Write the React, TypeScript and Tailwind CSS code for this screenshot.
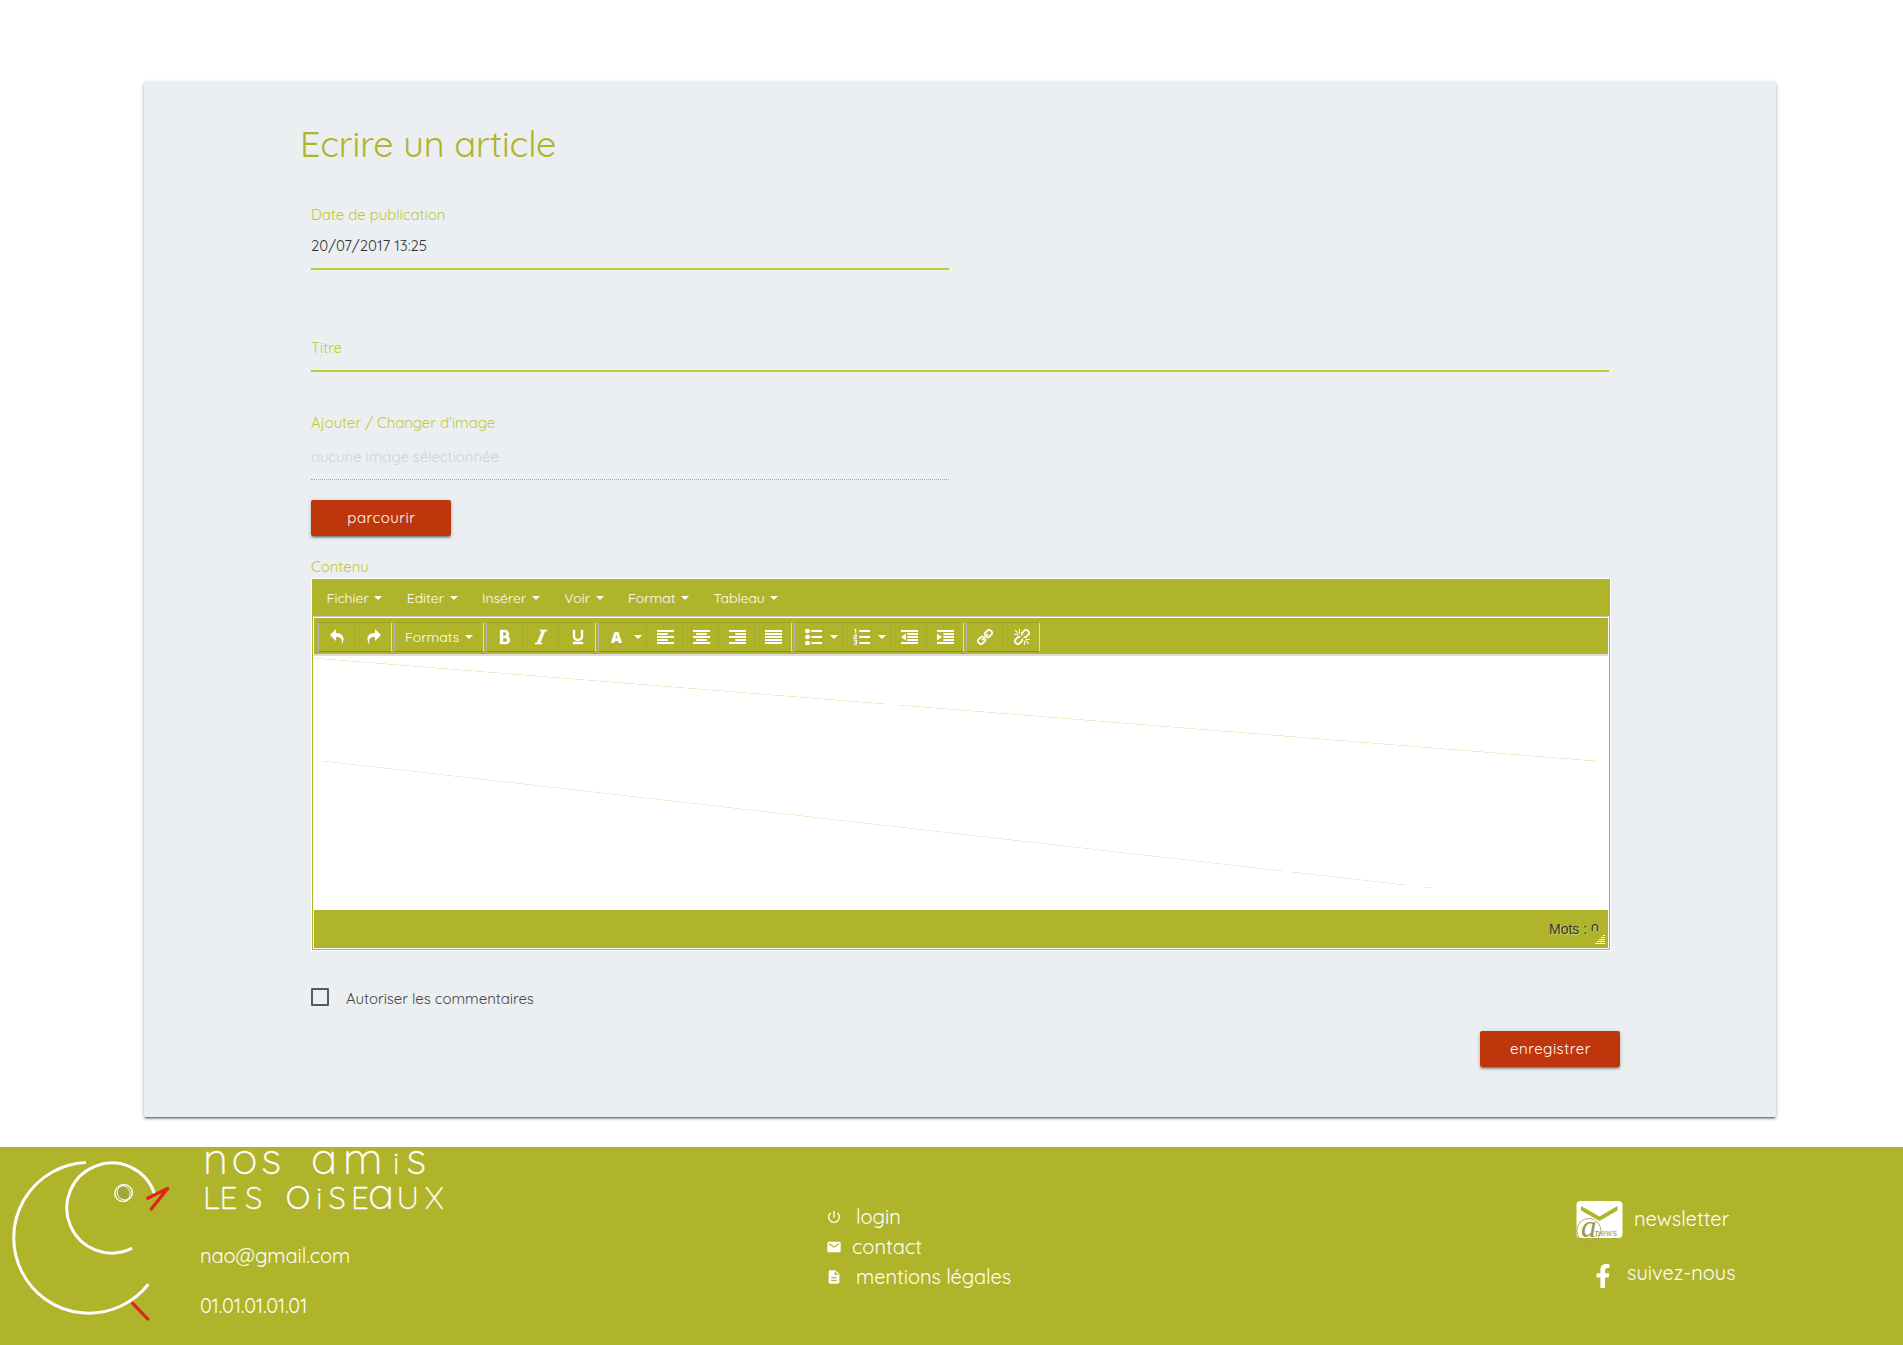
import type { ReactNode } from "react";
import { FaFacebookF } from "react-icons/fa";
import { MdDescription, MdEmail, MdPowerSettingsNew } from "react-icons/md";

const Caret = () => (
  <span className="h-0 w-0 shrink-0 border-x-4 border-t-4 border-x-transparent border-t-white" />
);

/* Toolbar glyph drawn on a 1024 unit grid */
const Glyph = ({ children, wide }: { children: ReactNode; wide?: boolean }) => (
  <svg
    viewBox="0 0 1024 1024"
    preserveAspectRatio="none"
    fill="currentColor"
    className={wide ? "ml-px h-4 w-[17px] shrink-0" : "ml-px h-4 w-4 shrink-0"}
  >
    {children}
  </svg>
);

const Bars = ({ rows }: { rows: [number, number][] }) => (
  <>
    {rows.map(([x, w], i) => (
      <rect key={i} x={x} y={64 + i * 192} width={w} height={128} />
    ))}
  </>
);

const CHAIN =
  "M476.9 675.1c4.6 9 7 19.2 7 29.7 0 17.6-6.7 34.1-19 46.3l-163.4 163.4c-12.2 12.2-28.7 19-46.3 19s-34.1-6.7-46.3-19l-99.4-99.4c-12.2-12.2-19-28.7-19-46.3s6.7-34.1 19-46.3l163.4-163.4c12.2-12.2 28.7-19 46.3-19 10.5 0 20.6 2.4 29.7 7l65.3-65.3c-27.9-21.4-61.4-32.2-95-32.2-40 0-79.9 15.2-110.3 45.6l-163.4 163.4c-60.7 60.7-60.7 160 0 220.6l99.4 99.4c30.4 30.4 70.3 45.6 110.3 45.6s79.9-15.2 110.3-45.6l163.4-163.4c55.8-55.8 60.2-144.3 13.3-205.3z";

const Chain = () => (
  <g stroke="currentColor" strokeWidth="36">
    <path d={CHAIN} />
    <path d={CHAIN} transform="rotate(180 512 512)" />
  </g>
);

const Tool = ({ children, last }: { children: ReactNode; last?: boolean }) => (
  <div
    className={
      last
        ? "flex h-[28px] w-9 items-center justify-center"
        : "flex h-[28px] w-9 items-center justify-center border-r border-[#a6ab29]"
    }
  >
    {children}
  </div>
);

const MenuTool = ({ children }: { children: ReactNode }) => (
  <div className="flex h-[28px] w-12 items-center justify-between border-r border-[#a6ab29] pr-[4px] pl-[9px]">
    {children}
    <Caret />
  </div>
);

const Group = ({ children }: { children: ReactNode }) => (
  <div className="flex h-[30px] border border-t-[#9da126] border-r-[#dcdcdc] border-b-[#8a8e22] border-l-[#b4b4b4]">
    {children}
  </div>
);

type Span = [number, number];

/* Stepped hairline: one short dash per pixel row, with interruptions */
const Stair = ({ x, y, rows, pitch, dash, gaps }: { x: number; y: number; rows: number; pitch: number; dash: number; gaps: Span[] }) => (
  <>
    {Array.from({ length: rows }, (_, i) => x + i * pitch).map((sx, i) =>
      gaps.some(([a, b]) => sx + dash / 2 > a && sx + dash / 2 < b) ? null : (
        <rect key={i} x={sx} y={y + i} width={dash} height={1} />
      ),
    )}
  </>
);

const menus = ["Fichier", "Editer", "Insérer", "Voir", "Format", "Tableau"];

const Editor = () => (
  <div className="flex h-[373px] w-[1300px] flex-col border border-white bg-[#afb42b] text-sm text-white">
    <div className="flex h-[37px] items-center pl-[14px]">
      {menus.map((m) => (
        <div key={m} className="mr-6 flex items-center gap-[6px]">
          <span className="relative left-[0.5px] tracking-[-0.02px]">{m}</span>
          <Caret />
        </div>
      ))}
    </div>
    <div className="mx-px mb-px flex h-[333px] flex-col border border-white border-t-[#c4c4c4]">
      <div className="flex h-[37px] gap-[2px] border-t border-white pt-[4px] pl-[4px]">
        <Group>
          <Tool>
            <Glyph>
              <path d="M761.862 1024c113.726-206.032 132.888-520.306-313.862-509.824v253.824l-384-384 384-384v248.372c534.962-13.942 594.57 472.214 313.862 775.628z" />
            </Glyph>
          </Tool>
          <Tool last>
            <Glyph>
              <path d="M576 248.372v-248.372l384 384-384 384v-253.824c-446.75-10.482-427.588 303.792-313.86 509.824-280.712-303.414-221.1-789.57 313.86-775.628z" />
            </Glyph>
          </Tool>
        </Group>
        <Group>
          <div className="flex h-[28px] w-[88px] items-center gap-[6px] pl-[10px]">
            <span>Formats</span>
            <Caret />
          </div>
        </Group>
        <Group>
          <Tool>
            <Glyph>
              <path
                fillRule="evenodd"
                stroke="currentColor"
                strokeWidth="24"
                d="M707.88 484.652c37.498-44.542 60.12-102.008 60.12-164.652 0-141.16-114.842-256-256-256h-320v896h384c141.158 0 256-114.842 256-256 0-92.956-49.798-174.496-124.12-219.348zM384 192h101.5c55.968 0 101.5 57.42 101.5 128s-45.532 128-101.5 128h-101.5v-256zM543 832h-159v-256h159c58.45 0 106 57.42 106 128s-47.55 128-106 128z"
              />
            </Glyph>
          </Tool>
          <Tool>
            <Glyph>
              <path d="M896 64v64h-128l-320 768h128v64h-448v-64h128l320-768h-128v-64h448z" stroke="currentColor" strokeWidth="36" />
            </Glyph>
          </Tool>
          <Tool last>
            <Glyph>
              <path d="M704 64h128v416c0 159.058-143.268 288-320 288-176.73 0-320-128.942-320-288v-416h128v416c0 40.166 18.238 78.704 51.354 108.506 36.896 33.204 86.846 51.494 140.646 51.494s103.75-18.29 140.646-51.494c33.116-29.802 51.354-68.34 51.354-108.506v-416zM192 832h640v128h-640v-128z" stroke="currentColor" strokeWidth="24" />
            </Glyph>
          </Tool>
        </Group>
        <Group>
          <div className="flex h-[28px] w-12 items-center justify-between border-r border-[#a6ab29] pr-[4px] pl-[12px]">
            <span className="font-['Open_Sans'] text-[15px] leading-4 font-extrabold">A</span>
            <Caret />
          </div>
          <Tool>
            <Glyph wide>
              <Bars rows={[[0, 1024], [0, 640], [0, 1024], [0, 640], [0, 1024]]} />
            </Glyph>
          </Tool>
          <Tool>
            <Glyph wide>
              <Bars rows={[[0, 1024], [192, 640], [0, 1024], [192, 640], [0, 1024]]} />
            </Glyph>
          </Tool>
          <Tool>
            <Glyph wide>
              <Bars rows={[[0, 1024], [384, 640], [0, 1024], [384, 640], [0, 1024]]} />
            </Glyph>
          </Tool>
          <Tool last>
            <Glyph wide>
              <Bars rows={[[0, 1024], [0, 1024], [0, 1024], [0, 1024], [0, 1024]]} />
            </Glyph>
          </Tool>
        </Group>
        <Group>
          <MenuTool>
            <Glyph wide>
              {[128, 512, 896].map((y) => (
                <g key={y}>
                  <circle cx="150" cy={y} r="150" />
                  <rect x="384" y={y - 64} width="640" height="128" />
                </g>
              ))}
            </Glyph>
          </MenuTool>
          <MenuTool>
            <Glyph wide>
              <path d="M384 64h640v128H384zM384 448h640v128H384zM384 832h640v128H384z" />
              <path
                d="M80 32h80v240M40 384h160v110H70v110h160M40 716h170v256H40M80 844h130"
                fill="none"
                stroke="currentColor"
                strokeWidth="64"
              />
            </Glyph>
          </MenuTool>
          <Tool>
            <Glyph wide>
              <Bars rows={[[0, 1024], [384, 640], [384, 640], [384, 640], [0, 1024]]} />
              <path d="M300 290v444L0 512z" />
            </Glyph>
          </Tool>
          <Tool last>
            <Glyph wide>
              <Bars rows={[[0, 1024], [384, 640], [384, 640], [384, 640], [0, 1024]]} />
              <path d="M0 290v444l300-222z" />
            </Glyph>
          </Tool>
        </Group>
        <Group>
          <Tool>
            <Glyph>
              <Chain />
              <path d="M350 674L674 350" stroke="currentColor" strokeWidth="110" strokeLinecap="round" />
            </Glyph>
          </Tool>
          <Tool last>
            <Glyph>
              <Chain />
              <path
                d="M352 30v210M30 352h210M90 90l170 170M672 994V784M994 672H784M934 934L764 764"
                stroke="currentColor"
                strokeWidth="70"
                strokeLinecap="round"
              />
            </Glyph>
          </Tool>
        </Group>
      </div>
      <div className="h-[256px] border-t-2 border-[#dddddd] bg-white">
        <svg viewBox="314 656 1294 254" className="block h-[254px] w-[1294px] text-[#ebedcb]" fill="currentColor">
          <Stair x={313} y={658} rows={103} pitch={12.46} dash={10.6} gaps={[[882, 896]]} />
          <Stair x={323.5} y={761} rows={127} pitch={8.73} dash={7.2} gaps={[[1280, 1293], [1407, 1424]]} />
        </svg>
      </div>
      <div className="relative h-[38px]">
        <div className="pt-[9px] pl-[1235px] font-['Liberation_Sans'] text-sm leading-5 whitespace-nowrap text-[#333333] [text-shadow:1px_1px_0_rgba(255,255,255,0.4)]">
          Mots : 0
        </div>
        <div className="absolute right-0 bottom-0 flex h-[17px] w-[17px] flex-col items-end gap-px bg-[#afb42b] pt-[4px] pr-[3px]">
          <i className="h-px w-[2px] bg-white" />
          <i className="h-px w-[4px] bg-white" />
          <i className="h-px w-[6px] bg-white" />
          <i className="h-px w-[8px] bg-white" />
          <i className="h-px w-[10px] bg-white" />
        </div>
      </div>
    </div>
  </div>
);

const Label = ({ children }: { children: ReactNode }) => (
  <div className="h-5 text-[15px] leading-5 tracking-[-0.06px] text-[#c0ca33]">{children}</div>
);

const Button = ({ children }: { children: ReactNode }) => (
  <button className="block h-9 w-[140px] rounded-[2px] bg-[#bf360c] pl-px text-[15px] leading-9 tracking-[0.5px] text-white shadow-[0_2px_2px_0_rgba(0,0,0,0.24),0_1px_5px_0_rgba(0,0,0,0.16),0_3px_1px_-2px_rgba(0,0,0,0.2)]">
    {children}
  </button>
);

const BirdLogo = () => (
  <svg viewBox="0 0 460 198" width="460" height="198" fill="none" className="block">
    <path d="M86 15.6A75.3 75.3 0 1 0 148.3 137.3" stroke="#fff" strokeWidth="3" />
    <path d="M154.3 46.3A45 45 0 1 0 131 101.7" stroke="#fff" strokeWidth="3" strokeLinecap="round" />
    <circle cx="123.7" cy="46" r="7" fill="#a3a63c" />
    <g stroke="#fff" strokeWidth="1">
      <circle cx="122.4" cy="46.6" r="7.8" />
      <circle cx="124.8" cy="45.4" r="7.6" />
      <circle cx="123.6" cy="46" r="8.6" />
    </g>
    <path d="M147.7 51.3L167.6 41.4L151.3 62" stroke="#e2231a" strokeWidth="3.2" strokeLinecap="round" strokeLinejoin="round" />
    <path d="M131.7 155.3L148.7 173" stroke="#e2231a" strokeWidth="3.2" />
    <g fill="#fff" stroke="#fff" strokeWidth="0.3" fontFamily="Quicksand, Lato, sans-serif" fontWeight="300">
      <text y="27" fontSize="43.5">
        <tspan x="203 231.5 261 288 311 343">nos am</tspan>
        <tspan x="393" fontSize="31">i</tspan>
        <tspan x="406">s</tspan>
      </text>
      <text y="61.7" fontSize="31.5">
        <tspan x="203 219.500 245">LES</tspan>
        <tspan x="285" fontSize="43.500">o</tspan>
        <tspan x="316 328.500 351">iSE</tspan>
        <tspan x="368" fontSize="43.500">a</tspan>
        <tspan x="396.500 425">UX</tspan>
      </text>
    </g>
  </svg>
);

const NewsletterIcon = () => (
  <svg viewBox="0 0 48 43" width="48" height="43" className="block">
    <rect x="0.5" y="0" width="46" height="37" rx="4" fill="#fff" />
    <path d="M5 5v4.5L23.5 20 41.5 9.5V5L23.5 15.500z" fill="#afb42b" />
    <circle cx="12.8" cy="29.500" r="12" fill="none" stroke="#a9a268" strokeWidth="0.9" />
    <text x="5" y="35.500" fontFamily="Liberation Serif, serif" fontStyle="italic" fontSize="31" fill="#9c9648">a</text>
    <text x="19" y="35" fontFamily="DejaVu Serif, serif" fontSize="9" textLength="22" lengthAdjust="spacingAndGlyphs" fill="#9c9648">news</text>
  </svg>
);

export default function App() {
  return (
    <div className="flex h-[1345px] w-[1903px] flex-col bg-white font-['Quicksand','Lato',sans-serif] font-normal">
      <main className="mt-[82px] ml-[144px] flex h-[1035px] w-[1632px] flex-col rounded-[2px] bg-[#eceff1] pt-10 pl-[167px] shadow-[0_2px_2px_0_rgba(0,0,0,0.24),0_1px_5px_0_rgba(0,0,0,0.22),0_3px_1px_-2px_rgba(0,0,0,0.25)]">
        <h1 className="-ml-[11px] h-11 text-[36px] leading-11 tracking-[-0.06px] text-[#afb42b]">Ecrire un article</h1>
        <div className="mt-[39px] w-[638px] border-b-2 border-[#c0ca33]">
          <Label>Date de publication</Label>
          <div className="mt-[11px] mb-3 h-5 text-[15px] leading-5 text-[#333333]">20/07/2017 13:25</div>
        </div>
        <div className="mt-[68px] w-[1298px] border-b-2 border-[#c0ca33] pb-3">
          <Label>Titre</Label>
        </div>
        <div className="mt-[41px] w-[638px] border-b border-dotted border-[#a8a8a8]">
          <Label>Ajouter / Changer d'image</Label>
          <div className="mt-[14px] mb-3 h-5 text-[15px] leading-5 tracking-[-0.06px] text-[#d1d1d1]">aucune image sélectionnée</div>
        </div>
        <div className="mt-5 mb-[21px]">
          <Button>parcourir</Button>
        </div>
        <Label>Contenu</Label>
        <div className="mt-px">
          <Editor />
        </div>
        <label className="mt-[37px] flex h-[18px] items-center">
          <span className="h-[18px] w-[18px] rounded-[1px] border-2 border-[#5a5a5a]" />
          <span className="mt-[3px] ml-[17px] text-[15px] leading-5 tracking-[-0.05px] text-[#444444]">Autoriser les commentaires</span>
        </label>
        <div className="mt-[25px] ml-[1169px]">
          <Button>enregistrer</Button>
        </div>
      </main>
      <footer className="mt-[30px] flex h-[198px] bg-[#afb42b] text-[20px] leading-[30px] text-white">
        <div className="grid w-[826px]">
          <div className="col-start-1 row-start-1">
            <BirdLogo />
          </div>
          <div className="col-start-1 row-start-1 flex flex-col gap-5 pt-[94px] pl-[200px]">
            <span className="tracking-[-0.08px]">nao@gmail.com</span>
            <span className="tracking-[-0.28px]">01.01.01.01.01</span>
          </div>
        </div>
        <div className="w-[750px] pt-[55px]">
          <div className="flex items-center">
            <MdPowerSettingsNew className="h-4 w-4" />
            <span className="ml-[14px]">login</span>
          </div>
          <div className="flex items-center">
            <MdEmail className="h-4 w-4" />
            <span className="ml-[10px]">contact</span>
          </div>
          <div className="flex items-center">
            <MdDescription className="h-4 w-4" />
            <span className="ml-[14px] tracking-[-0.05px]">mentions légales</span>
          </div>
        </div>
        <div className="pt-[54px]">
          <div className="flex">
            <NewsletterIcon />
            <span className="ml-[10px] pt-[3px]">newsletter</span>
          </div>
          <div className="mt-[14px] flex items-center pl-[15px]">
            <FaFacebookF className="mt-[5px] h-6 w-[24px]" />
            <span className="ml-[12px]">suivez-nous</span>
          </div>
        </div>
      </footer>
    </div>
  );
}
